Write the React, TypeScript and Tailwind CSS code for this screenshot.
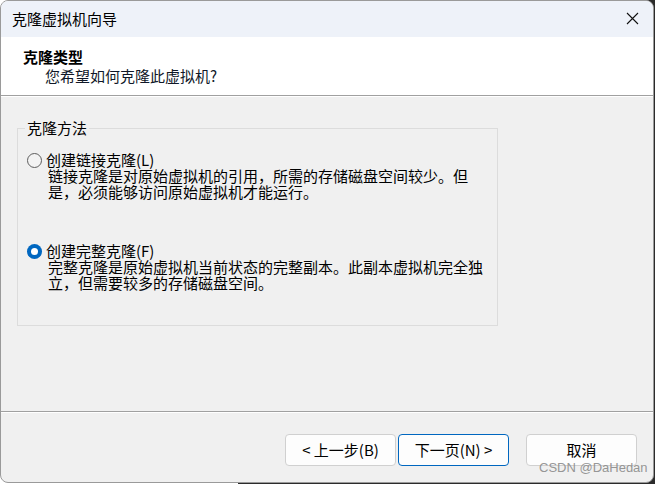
import React from 'react';

const font = { fontFamily: '"Noto Sans CJK SC", "Noto Sans", sans-serif' };

function Radio({ checked }: { checked?: boolean }) {
  if (checked) {
    return (
      <div className="w-[15px] h-[15px] shrink-0 rounded-full bg-[#0067c0] flex items-center justify-center">
        <div className="w-[7px] h-[7px] rounded-full bg-white" />
      </div>
    );
  }
  return <div className="w-[15px] h-[15px] shrink-0 rounded-full border border-[#5d5d5d] bg-[#f3f3f3]" />;
}

function Option({ label, lines, checked }: { label: string; lines: string[]; checked?: boolean }) {
  return (
    <div className="flex items-start gap-[4px] ml-[1px]">
      <Radio checked={checked} />
      <div className="text-[15px] leading-[16px] text-black">
        <div className="-mt-[1px]">{label}</div>
        <div className="pl-[2px]">
          {lines.map((l) => (
            <div key={l}>{l}</div>
          ))}
        </div>
      </div>
    </div>
  );
}

function Button({ children, primary }: { children: React.ReactNode; primary?: boolean }) {
  return (
    <button
      className={
        'w-[111px] h-[32px] rounded-[4px] bg-[#fdfdfd] text-[15px] leading-[16px] text-black flex items-center justify-center border ' +
        (primary ? 'border-[#0067c0]' : 'border-[#d0d0d0]')
      }
    >
      {children}
    </button>
  );
}

export default function App() {
  return (
    <div
      className="w-[655px] h-[484px] bg-[linear-gradient(to_right,#ffffff_0,#ffffff_238px,#2b2b2b_238px)]"
      style={font}
    >
      <div className="w-[654px] h-[483px] rounded-[8px] border border-[#9a9a9a] overflow-hidden flex flex-col bg-[#f0f0f0] relative">
        {/* title bar */}
        <div className="h-[36px] shrink-0 bg-[#eef2f9] flex items-center justify-between pl-[11px] pr-[14px]">
          <span className="text-[15px] leading-[16px] text-black">克隆虚拟机向导</span>
          <svg width="13" height="13" viewBox="0 0 13 13" className="mt-[-1px]">
            <path d="M1 1 L12 12 M12 1 L1 12" stroke="#111" strokeWidth="1.1" />
          </svg>
        </div>

        {/* header */}
        <div className="h-[59px] shrink-0 bg-white pt-[12px] pl-[22px] border-b border-[#a0a0a0]">
          <div className="text-[15px] leading-[16px] font-bold text-black">克隆类型</div>
          <div className="mt-[3px] pl-[22px] text-[15px] leading-[16px] text-[#101828]">您希望如何克隆此虚拟机?</div>
        </div>
        <div className="h-px bg-white shrink-0" />

        {/* body */}
        <div className="flex-1 pl-[16px] pt-[23px]">
          <fieldset className="w-[481px] border border-[#dcdcdc] pl-[8px] pt-[17px] pb-[34px]">
            <legend className="-ml-[1px] px-[2px] text-[15px] leading-[16px] text-black">克隆方法</legend>
            <Option
              label="创建链接克隆(L)"
              lines={['链接克隆是对原始虚拟机的引用，所需的存储磁盘空间较少。但', '是，必须能够访问原始虚拟机才能运行。']}
            />
            <div className="h-[44px]" />
            <Option
              checked
              label="创建完整克隆(F)"
              lines={['完整克隆是原始虚拟机当前状态的完整副本。此副本虚拟机完全独', '立，但需要较多的存储磁盘空间。']}
            />
          </fieldset>
        </div>

        {/* footer */}
        <div className="h-px bg-[#a0a0a0] shrink-0" />
        <div className="h-px bg-white shrink-0" />
        <div className="h-[69px] shrink-0 flex items-start pt-[21px] pl-[284px]">
          <Button>&lt; 上一步(B)</Button>
          <div className="w-[2px]" />
          <Button primary>下一页(N) &gt;</Button>
          <div className="w-[17px]" />
          <Button>取消</Button>
        </div>

        <span
          className="absolute left-[538px] top-[459px] text-[13px] leading-[16px] text-[#8a8a8a]/90"
          style={{ fontFamily: '"Liberation Sans", Arial, sans-serif' }}
        >
          CSDN @DaHedan
        </span>
      </div>
    </div>
  );
}
